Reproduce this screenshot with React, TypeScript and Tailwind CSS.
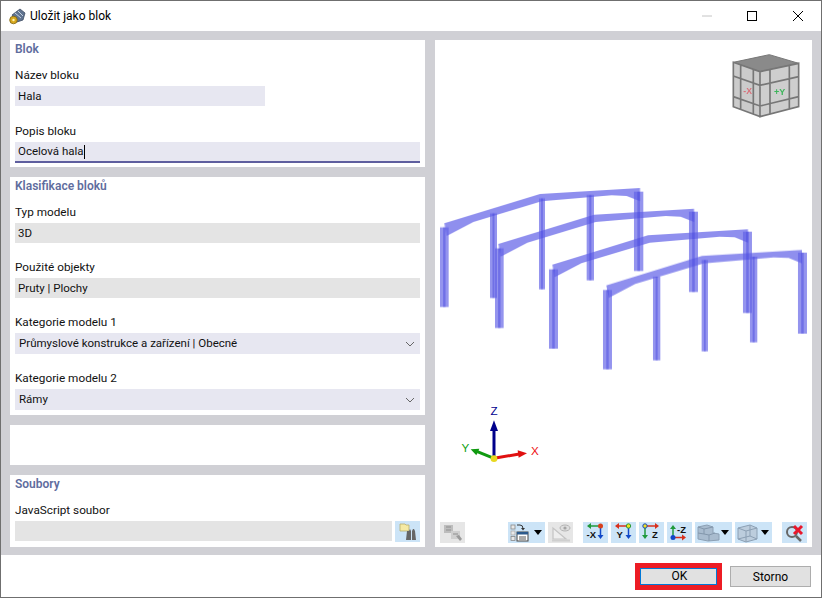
import type { ReactNode } from "react";

const font = "font-['Roboto','Liberation_Sans',sans-serif]";

function Panel({ title, className, children }: { title?: string; className: string; children?: ReactNode }) {
  return (
    <section className={`bg-white px-[5px] ${className}`}>
      {title && <h2 className="h-[18px] text-[12px] leading-[19px] font-semibold text-[#5f6d9e]">{title}</h2>}
      {children}
    </section>
  );
}

function Label({ text, className }: { text: string; className: string }) {
  return <div className={`h-[18px] mb-[2px] text-[11.75px] leading-[19px] text-[#111] ${className}`}>{text}</div>;
}

function Box({ value, className, caret }: { value?: string; className: string; caret?: boolean }) {
  return (
    <div className={`px-[3px] pt-[1px] text-[11.5px] text-[#111] flex items-center ${className}`}>
      {value}
      {caret && <span className="w-px h-[14px] bg-black" />}
    </div>
  );
}

function Select({ value }: { value: string }) {
  return (
    <div className="h-[21px] bg-[#e7e7f1] px-[4px] pt-[1px] flex items-center justify-between text-[11.5px] text-[#111]">
      <span>{value}</span>
      <svg width="10" height="6" viewBox="0 0 10 6" className="mr-[1px]">
        <path d="M1 1l4 4 4-4" fill="none" stroke="#666" strokeWidth="1" />
      </svg>
    </div>
  );
}

function Caret() {
  return (
    <svg width="8" height="5" viewBox="0 0 8 5" className="ml-[1px]">
      <path d="M0 0h8L4 5z" fill="#000" />
    </svg>
  );
}

function Btn({ gray, className = "", children }: { gray?: boolean; className?: string; children: ReactNode }) {
  return (
    <div className={`h-[21px] flex items-center shrink-0 ${gray ? "bg-[#e6e6e6]" : "bg-[#cce4f7]"} ${className}`}>
      {children}
    </div>
  );
}

const A = {
  red: "#d8301c",
  green: "#1f9a3c",
  blue: "#1048c8",
};

function AxisIcon({ kind }: { kind: "x" | "y" | "z" | "mz" }) {
  const t = "font-['Liberation_Sans',sans-serif]";
  return (
    <svg width="25" height="21" viewBox="0 0 25 21">
      {kind === "x" && (
        <>
          <path d="M8 4h9" stroke={A.green} strokeWidth="1.5" />
          <path d="M8 1v6L4 4z" fill={A.green} />
          <path d="M17.5 4v9" stroke={A.blue} strokeWidth="1.5" />
          <path d="M14.5 13h6l-3 4z" fill={A.blue} />
          <circle cx="17.5" cy="4" r="2.5" fill="#d8401c" />
          <text x="3.5" y="16" fontSize="9.5" fontWeight="700" fill="#111" className={t}>-X</text>
        </>
      )}
      {kind === "y" && (
        <>
          <path d="M8 4h9" stroke={A.red} strokeWidth="1.5" />
          <path d="M8 1v6L4 4z" fill={A.red} />
          <path d="M17.5 4v9" stroke={A.blue} strokeWidth="1.5" />
          <path d="M14.5 13h6l-3 4z" fill={A.blue} />
          <circle cx="17.5" cy="4" r="2.2" fill="#f0e020" stroke="#2a9a3c" strokeWidth="1" />
          <text x="5.5" y="16" fontSize="9.5" fontWeight="700" fill="#111" className={t}>Y</text>
        </>
      )}
      {kind === "z" && (
        <>
          <path d="M7 4h9" stroke={A.red} strokeWidth="1.5" />
          <path d="M16 1v6l4-3z" fill={A.red} />
          <path d="M6 5v8" stroke={A.green} strokeWidth="1.5" />
          <path d="M3 13h6l-3 4z" fill={A.green} />
          <circle cx="6" cy="4" r="2.2" fill="#f0e020" stroke={A.blue} strokeWidth="1" />
          <text x="13" y="16" fontSize="9.5" fontWeight="700" fill="#111" className={t}>Z</text>
        </>
      )}
      {kind === "mz" && (
        <>
          <path d="M6 6v9" stroke={A.green} strokeWidth="1.5" />
          <path d="M3 7h6L6 3z" fill={A.green} />
          <path d="M7 15.5h8" stroke={A.red} strokeWidth="1.5" />
          <path d="M15 12.5v6l4-3z" fill={A.red} />
          <circle cx="6" cy="15.5" r="2.5" fill={A.blue} />
          <text x="10" y="11" fontSize="9.5" fontWeight="700" fill="#111" className={t}>-Z</text>
        </>
      )}
    </svg>
  );
}

function ListIcon() {
  return (
    <svg width="25" height="21" viewBox="0 0 25 21">
      <rect x="3" y="3" width="4" height="4" fill="#e8e8e8" stroke="#888" strokeWidth="0.8" />
      <rect x="3" y="9" width="4" height="4" fill="#e8e8e8" stroke="#aaa" strokeWidth="0.8" />
      <rect x="3" y="14.5" width="4" height="4" fill="#e8e8e8" stroke="#888" strokeWidth="0.8" />
      <path d="M9 3h3q3 0 3 3.5" fill="none" stroke="#333" strokeWidth="1" />
      <path d="M13 6h4l-2 2.5z" fill="#333" />
      <rect x="9" y="10" width="11" height="9" fill="#fff" stroke="#444" strokeWidth="1" />
      <rect x="9" y="10" width="11" height="2.5" fill="#2c5a8c" />
      <path d="M11 15h7M11 17h7" stroke="#555" strokeWidth="1" />
    </svg>
  );
}

function RulerIcon() {
  return (
    <svg width="25" height="21" viewBox="0 0 25 21">
      <path d="M5 17V6l13 11z" fill="#eee" stroke="#c4c4c4" strokeWidth="1.2" />
      <path d="M4 18.5h18" stroke="#cfcfcf" strokeWidth="2" />
      <ellipse cx="17" cy="6" rx="5" ry="3" fill="#dedede" stroke="#b4b4b4" />
      <circle cx="17" cy="6" r="1.6" fill="#a4a4a4" />
    </svg>
  );
}

function StairsIcon() {
  return (
    <svg width="25" height="21" viewBox="0 0 25 21">
      <path d="M3 5l9-2 6 2v6l6 1v6l-11 1-10-2z" fill="#a9bccf" stroke="#8ca0b4" strokeWidth="1" />
      <path d="M3 5l6 2 9-2M9 7v5l-6-1M9 12l5 1 6-2M14 13v6" fill="none" stroke="#8397ac" strokeWidth="1" />
    </svg>
  );
}

function BoxIcon() {
  return (
    <svg width="25" height="21" viewBox="0 0 25 21">
      <path d="M3 6l12-3 7 3v11l-11 3-8-3z" fill="#bccddd" stroke="#8ca0b4" strokeWidth="1" />
      <path d="M3 6l8 3 11-3M11 9v11M3 17l12-3 7 3M15 3v11" fill="none" stroke="#8ca0b4" strokeWidth="1" />
    </svg>
  );
}

function ResetIcon() {
  return (
    <svg width="25" height="21" viewBox="0 0 25 21">
      <circle cx="10" cy="10" r="5" fill="none" stroke="#666" strokeWidth="2" />
      <path d="M14 14l5 5" stroke="#666" strokeWidth="2.5" />
      <path d="M12 4l8 8M20 4l-8 8" stroke="#e8172c" strokeWidth="3" />
    </svg>
  );
}

function FolderIcon() {
  return (
    <svg width="25" height="21" viewBox="0 0 25 21">
      <path d="M5 5V3h5l1 1h3v6H5z" fill="#f5eaa4" stroke="#b8ae70" strokeWidth="0.8" />
      <path d="M11 19l1-9h2l1-2 1 2v9zM17 19v-9l1-2h1l1 2 1 9z" fill="#666" />
    </svg>
  );
}

function GrayIcon() {
  return (
    <svg width="25" height="21" viewBox="0 0 25 21">
      <rect x="4" y="3" width="9" height="8" fill="#bdbdbd" />
      <rect x="11" y="9" width="9" height="8" fill="#cfcfcf" />
      <path d="M6 5h5M6 8h5M13 12h5" stroke="#8f8f8f" />
      <path d="M16 14l4 5 2-2-3-4z" fill="#9a9a9a" />
    </svg>
  );
}

function TitleIcon() {
  return (
    <svg width="17" height="17" viewBox="0 0 17 17">
      <path d="M3 7l8-6 5 4-2 7-6 2z" fill="#5f7390" stroke="#3f4d62" strokeWidth="0.8" />
      <path d="M6 5l6 5M9 3l5 5" stroke="#c6d2e0" strokeWidth="1" />
      <circle cx="4.5" cy="12" r="3.8" fill="#d8a91e" stroke="#7c6210" strokeWidth="0.8" />
      <circle cx="4.5" cy="12" r="1.2" fill="#fff3b0" />
    </svg>
  );
}

// frame columns in zoomed picture coordinates: x, width, top, bottom
const columns = [
  [30, 26, 172, 411],
  [180, 21, 130, 384],
  [327, 18, 85, 358],
  [470, 22, 75, 331],
  [612, 28, 65, 303],
  [195, 26, 235, 474],
  [777, 27, 125, 366],
  [357, 27, 298, 536],
  [939, 27, 185, 429],
  [519, 27, 360, 598],
  [669, 22, 320, 571],
  [815, 19, 270, 544],
  [960, 22, 260, 517],
  [1104, 27, 248, 491],
];

function Model() {
  return (
    <g transform="translate(-5 130) scale(0.3333)" className="blur-[0.4px]">
      {[0, 1, 2, 3].map((i) => (
        <polygon
          key={i}
          transform={`translate(${i * 162} ${i * 62})`}
          points="43,160 330,72 630,54 630,94 590,78 545,76 335,94 130,156 50,198"
          fill="#6a6ae8"
          fillOpacity="0.75"
        />
      ))}
      {columns.map(([x, w, top, bottom]) => (
        <g key={`${x}-${top}`}>
          <rect x={x} y={top} width={w} height={bottom - top} fill="#6262e6" fillOpacity="0.68" />
          <rect x={x + w * 0.36} y={top} width={w * 0.28} height={bottom - top} fill="#4444dd" fillOpacity="0.45" />
        </g>
      ))}
    </g>
  );
}

function Cube() {
  return (
    <g transform="translate(265 -40) scale(0.3333)" className="blur-[0.4px]">
      <path d="M100 187l108-23 88 26-116 25z" fill="#8a8a8a" stroke="#777" strokeWidth="3" />
      <path d="M100 187l80 28v135l-80-30z" fill="#cbcbcb" />
      <path d="M180 215l116-25v130l-116 30z" fill="#cecece" />
      <path
        d="M100 187l80 28v135l-80-30zM180 215l116-25v130l-116 30zM100 228l80 28 116-26M100 290l80 28 116-28M122 195v133M160 208v135M210 208v135M268 196v130"
        fill="none"
        stroke="#777"
        strokeWidth="5"
      />
      <text x="130" y="282" fontSize="26" fontWeight="700" fill="#d9707a" className="font-['Liberation_Sans',sans-serif]">-X</text>
      <text x="222" y="286" fontSize="27" fontWeight="700" fill="#3cb55a" className="font-['Liberation_Sans',sans-serif]">+Y</text>
    </g>
  );
}

function Axes() {
  const t = "font-['Liberation_Sans',sans-serif]";
  return (
    <g transform="translate(-5 355) scale(0.3333)">
      <path d="M192 190V105" stroke="#00008b" strokeWidth="9" />
      <path d="M180 108h24L192 76z" fill="#00008b" />
      <path d="M192 190L268 177" stroke="#e01010" strokeWidth="9" />
      <path d="M263 166l28 9-25 13z" fill="#e01010" />
      <path d="M192 190L142 170" stroke="#109a10" strokeWidth="9" />
      <path d="M122 163l26-2-9 20z" fill="#109a10" />
      <circle cx="192" cy="191" r="10" fill="#e8d820" />
      <text x="192" y="60" fontSize="35" textAnchor="middle" fill="#000090" className={t}>Z</text>
      <text x="315" y="181" fontSize="35" textAnchor="middle" fill="#ee1010" className={t}>X</text>
      <text x="106" y="171" fontSize="35" textAnchor="middle" fill="#10a010" className={t}>Y</text>
    </g>
  );
}

export default function App() {
  return (
    <div className={`w-[822px] h-[598px] flex flex-col bg-white border border-[#6f6f6f] ${font}`}>
      <header className="h-[30px] flex items-center pl-[8px] text-[12px] text-black">
        <TitleIcon />
        <span className="ml-[4px]">Uložit jako blok</span>
        <div className="ml-auto flex items-center">
          <svg width="12" height="12" viewBox="0 0 12 12" className="mr-[33px]">
            <path d="M1 6h10" stroke="#c4c4c4" />
          </svg>
          <svg width="12" height="12" viewBox="0 0 12 12" className="mr-[34px]">
            <rect x="1.5" y="1.5" width="9" height="9" fill="none" stroke="#000" />
          </svg>
          <svg width="12" height="12" viewBox="0 0 12 12" className="mr-[17px]">
            <path d="M1 1l10 10M11 1L1 11" stroke="#000" />
          </svg>
        </div>
      </header>

      <main className="h-[524px] bg-[#d0d0d5] pt-[9px] px-[9px] flex gap-[10px]">
        <div className="w-[415px] flex flex-col gap-[10px]">
          <Panel title="Blok" className="h-[127px]">
            <Label text="Název bloku" className="mt-[8px]" />
            <Box value="Hala" className="w-[250px] h-[20px] bg-[#e7e7f1]" />
            <Label text="Popis bloku" className="mt-[16px]" />
            <Box value="Ocelová hala" caret className="h-[21px] bg-[#e7e7f1] border-b-2 border-[#5f5f9f]" />
          </Panel>
          <Panel title="Klasifikace bloků" className="h-[238px]">
            <Label text="Typ modelu" className="mt-[8px]" />
            <Box value="3D" className="h-[20px] bg-[#e4e4e4]" />
            <Label text="Použité objekty" className="mt-[15px]" />
            <Box value="Pruty | Plochy" className="h-[20px] bg-[#e4e4e4]" />
            <Label text="Kategorie modelu 1" className="mt-[15px]" />
            <Select value="Průmyslové konstrukce a zařízení | Obecné" />
            <Label text="Kategorie modelu 2" className="mt-[15px]" />
            <Select value="Rámy" />
          </Panel>
          <Panel className="h-[40px]" />
          <Panel title="Soubory" className="h-[72px]">
            <Label text="JavaScript soubor" className="mt-[8px]" />
            <div className="flex justify-between">
              <div className="w-[377px] h-[20px] bg-[#e4e4e4]" />
              <Btn>
                <FolderIcon />
              </Btn>
            </div>
          </Panel>
        </div>

        <section className="w-[377px] h-[507px] bg-white flex flex-col">
          <svg width="377" height="482" viewBox="0 0 377 482" className="block">
            <Cube />
            <Model />
            <Axes />
          </svg>
          <div className="flex pl-[5px]">
            <Btn gray>
              <GrayIcon />
            </Btn>
            <Btn className="ml-[43px] w-[37px]">
              <ListIcon />
              <Caret />
            </Btn>
            <Btn gray className="ml-[3px]">
              <RulerIcon />
            </Btn>
            <Btn className="ml-[10px]">
              <AxisIcon kind="x" />
            </Btn>
            <Btn className="ml-[3px]">
              <AxisIcon kind="y" />
            </Btn>
            <Btn className="ml-[3px]">
              <AxisIcon kind="z" />
            </Btn>
            <Btn className="ml-[3px]">
              <AxisIcon kind="mz" />
            </Btn>
            <Btn className="ml-[3px] w-[37px]">
              <StairsIcon />
              <Caret />
            </Btn>
            <Btn className="ml-[3px] w-[37px]">
              <BoxIcon />
              <Caret />
            </Btn>
            <Btn className="ml-[10px]">
              <ResetIcon />
            </Btn>
          </div>
        </section>
      </main>

      <footer className="flex-1 flex items-center justify-end pr-[10px] gap-[8px] text-[12px] text-black">
        <div className="border-[5px] border-[#ed1c24]">
          <button className="block w-[77px] h-[17px] bg-[#e1e1e1] border border-[#0078d7] leading-[15px] pl-[2px]">OK</button>
        </div>
        <button className="w-[81px] h-[21px] bg-[#e1e1e1] border border-[#adadad] mt-[1px]">Storno</button>
      </footer>
    </div>
  );
}
